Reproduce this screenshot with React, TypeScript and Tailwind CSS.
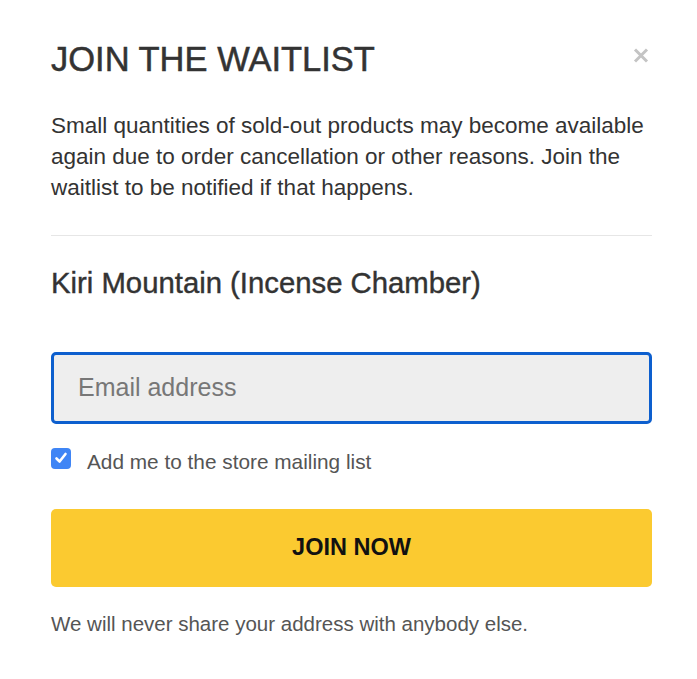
import { useState } from "react";

export default function App() {
  const [subscribe, setSubscribe] = useState(true);

  return (
    <div className="min-h-[679px] bg-white pl-[51px] pr-[45px] pt-[42px] font-['Liberation_Sans',Arial,sans-serif] text-[#333]">
      <div className="flex items-start justify-between">
        <h2 className="text-[34.5px] leading-none [-webkit-text-stroke:0.5px_#333]">JOIN THE WAITLIST</h2>
        <button className="mt-[6px] mr-[3px]" aria-label="Close">
          <svg width="16" height="15" viewBox="0 0 16 15" className="block">
            <path d="M2 1.5 L14 13.5 M14 1.5 L2 13.5" stroke="#c4c4c4" strokeWidth="3" />
          </svg>
        </button>
      </div>

      <p className="mt-[33px] text-[22.5px] leading-[31px]">
        Small quantities of sold-out products may become available again due to
        order cancellation or other reasons. Join the waitlist to be notified if
        that happens.
      </p>

      <div className="mt-[32px] h-px bg-[#e6e6e6]" />

      <h3 className="mt-[32px] text-[29.3px] leading-none [-webkit-text-stroke:0.4px_#333]">
        Kiri Mountain (Incense Chamber)
      </h3>

      <input
        type="email"
        placeholder="Email address"
        className="mt-[55px] block h-[72px] w-full rounded-[5px] border-[3px] border-[#0d5fce] bg-[#eeeeee] px-[24px] text-[25px] text-[#333] outline-none placeholder:text-[#777]"
      />

      <label className="mt-[24px] flex cursor-pointer items-start gap-[16px]">
        <span
          onClick={() => setSubscribe(!subscribe)}
          className={`flex h-[21px] w-[20px] items-center justify-center rounded-[4px] ${
            subscribe ? "bg-[#3f85f5]" : "border border-[#999] bg-white"
          }`}
        >
          {subscribe && (
            <svg width="14" height="14" viewBox="0 0 14 14">
              <path d="M2.5 7.5 L5.6 10.5 L11.5 3" fill="none" stroke="white" strokeWidth="2.6" strokeLinecap="round" strokeLinejoin="round" />
            </svg>
          )}
        </span>
        <span className="mt-[4px] text-[20.8px] leading-none text-[#555]">Add me to the store mailing list</span>
      </label>

      <button className="mt-[36px] flex h-[78px] w-full items-center justify-center rounded-[5px] bg-[#fbca30] text-[23.5px] font-bold text-[#111]">
        JOIN NOW
      </button>

      <p className="mt-[27px] text-[20.5px] leading-none text-[#555]">
        We will never share your address with anybody else.
      </p>
    </div>
  );
}
